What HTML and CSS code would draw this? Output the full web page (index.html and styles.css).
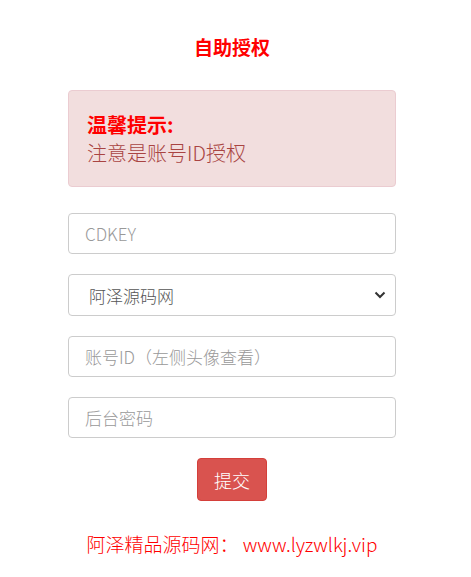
FILE: index.html
```html
<!DOCTYPE html>
<html lang="zh-CN">
<head>
<meta charset="utf-8">
<title>自助授权</title>
<link rel="stylesheet" href="styles.css">
</head>
<body>
<div class="page">
  <h1 class="title">自助授权</h1>
  <div class="alert">
    <div class="alert-title">温馨提示:</div>
    <div class="alert-text">注意是账号ID授权</div>
  </div>
  <form class="form">
    <input class="field" type="text" placeholder="CDKEY">
    <div class="select-wrap">
      <select class="field select">
        <option>阿泽源码网</option>
      </select>
      <svg class="chev" width="12" height="8" viewBox="0 0 12 8"><path d="M1.5 1.5 L6 6 L10.5 1.5" fill="none" stroke="#333" stroke-width="2"/></svg>
    </div>
    <input class="field" type="text" placeholder="账号ID（左侧头像查看）">
    <input class="field" type="password" placeholder="后台密码">
    <div class="actions"><button type="button" class="btn">提交</button></div>
  </form>
  <p class="footer">阿泽精品源码网： www.lyzwlkj.vip</p>
</div>
</body>
</html>
```
FILE: styles.css
```css
* { box-sizing: border-box; }
body {
  margin: 0;
  background: #fff;
  font-family: "Open Sans", "Noto Sans CJK SC", sans-serif;
  color: #333;
}
.page {
  width: 328px;
  margin-left: 68px;
  padding-top: 33px;
}
.title {
  margin: 0;
  text-align: center;
  font-size: 19px;
  line-height: 28px;
  font-weight: bold;
  color: #f00;
  font-family: "Noto Sans CJK SC", sans-serif;
}
.alert {
  margin-top: 29px;
  background: #f2dede;
  border: 1px solid #ebccd1;
  border-radius: 4px;
  padding: 20px 18px 19px;
  font-family: "Noto Sans CJK SC", sans-serif;
  font-size: 20px;
}
.alert-title {
  color: #f00;
  font-weight: bold;
  line-height: 28px;
}
.alert-text {
  color: #a94442;
  font-weight: 300;
  line-height: 28px;
}
.form {
  margin-top: 26px;
  display: flex;
  flex-direction: column;
  gap: 20px;
}
.field {
  display: block;
  width: 100%;
  height: 41px;
  padding: 0 16px;
  border: 1px solid #ccc;
  border-radius: 4px;
  background: #fff;
  font-family: "Noto Sans CJK SC", sans-serif;
  font-weight: 300;
  font-size: 17px;
  color: #555;
  outline: none;
}
.field::placeholder { color: #999; }
.select-wrap { position: relative; }
.select {
  -webkit-appearance: none;
  appearance: none;
  padding-left: 20px;
  height: 42px;
}
.chev {
  position: absolute;
  right: 10px;
  top: 17px;
  pointer-events: none;
}
.actions {
  display: flex;
  justify-content: center;
}
.btn {
  height: 43px;
  padding: 0 16px;
  background: #d9534f;
  border: 1px solid #d43f3a;
  border-radius: 4px;
  color: #fff;
  font-family: "Noto Sans CJK SC", sans-serif;
  font-weight: 300;
  font-size: 18px;
}
.footer {
  margin: 29px 0 0;
  text-align: center;
  color: #f00;
  font-family: "Noto Sans CJK SC", sans-serif;
  font-weight: 300;
  font-size: 19px;
}
```
